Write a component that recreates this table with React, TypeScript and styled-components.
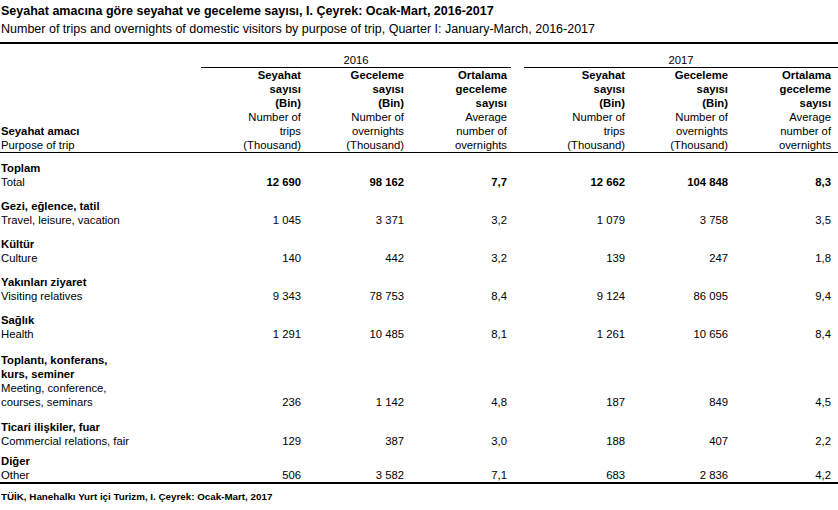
import React from "react";
import styled, { createGlobalStyle } from "styled-components";

const GlobalStyle = createGlobalStyle`
  html, body {
    margin: 0;
    padding: 0;
    background: #ffffff;
  }
  body {
    font-family: "Liberation Sans", Arial, sans-serif;
    color: #000;
  }
`;

const Page = styled.div`
  width: 838px;
  padding-top: 2px;
`;

const Title = styled.div`
  font-size: 12.5px;
  font-weight: bold;
  line-height: 18px;
  padding-left: 1px;
`;

const Subtitle = styled.div`
  font-size: 12.5px;
  line-height: 18px;
  padding-left: 1px;
`;

const Table = styled.table`
  width: 838px;
  table-layout: fixed;
  border-collapse: collapse;
  margin-top: 4px;
  border-top: 2px solid #000;
  font-size: 11.3px;
  line-height: 14px;
`;

const YearCell = styled.th<{ $line: boolean }>`
  font-weight: normal;
  text-align: center;
  padding: 9px 0 0 0;
  border-bottom: ${(p) => (p.$line ? "1px solid #000" : "none")};
`;

const HeadCell = styled.th<{ $pr: number }>`
  font-weight: normal;
  text-align: right;
  vertical-align: bottom;
  padding: 0 ${(p) => p.$pr}px 0 0;
  border-bottom: 1px solid #000;
`;

const LabelHead = styled.th`
  font-weight: normal;
  text-align: left;
  vertical-align: bottom;
  padding: 0 0 0 1px;
  border-bottom: 1px solid #000;
`;

const Line = styled.span<{ $bold?: boolean }>`
  display: block;
  white-space: nowrap;
  font-weight: ${(p) => (p.$bold ? "bold" : "normal")};
`;

const BodyRow = styled.tr<{ $last?: boolean }>`
  border-bottom: ${(p) => (p.$last ? "2px solid #000" : "none")};
`;

const LabelCell = styled.td<{ $pt: number }>`
  text-align: left;
  vertical-align: bottom;
  padding: ${(p) => p.$pt}px 0 0 1px;
`;

const NumCell = styled.td<{ $pt: number; $pr: number; $bold?: boolean }>`
  text-align: right;
  vertical-align: bottom;
  white-space: nowrap;
  padding: ${(p) => p.$pt}px ${(p) => p.$pr}px 0 0;
  font-weight: ${(p) => (p.$bold ? "bold" : "normal")};
`;

const Footer = styled.div`
  font-size: 9.8px;
  font-weight: bold;
  line-height: 12px;
  padding: 7px 0 0 1px;
`;

type Row = {
  tr: string[];
  en: string[];
  v: string[];
  pt: number;
  bold?: boolean;
};

const rows: Row[] = [
  { tr: ["Toplam"], en: ["Total"], v: ["12 690", "98 162", "7,7", "12 662", "104 848", "8,3"], pt: 8, bold: true },
  { tr: ["Gezi, eğlence, tatil"], en: ["Travel, leisure, vacation"], v: ["1 045", "3 371", "3,2", "1 079", "3 758", "3,5"], pt: 10 },
  { tr: ["Kültür"], en: ["Culture"], v: ["140", "442", "3,2", "139", "247", "1,8"], pt: 10 },
  { tr: ["Yakınları ziyaret"], en: ["Visiting relatives"], v: ["9 343", "78 753", "8,4", "9 124", "86 095", "9,4"], pt: 10 },
  { tr: ["Sağlık"], en: ["Health"], v: ["1 291", "10 485", "8,1", "1 261", "10 656", "8,4"], pt: 10 },
  {
    tr: ["Toplantı, konferans,", "kurs, seminer"],
    en: ["Meeting, conference,", "courses, seminars"],
    v: ["236", "1 142", "4,8", "187", "849", "4,5"],
    pt: 12,
  },
  { tr: ["Ticari ilişkiler, fuar"], en: ["Commercial relations, fair"], v: ["129", "387", "3,0", "188", "407", "2,2"], pt: 11 },
  { tr: ["Diğer"], en: ["Other"], v: ["506", "3 582", "7,1", "683", "2 836", "4,2"], pt: 6 },
];

const heads: { tr: string[]; en: string[] }[] = [
  { tr: ["Seyahat", "sayısı", "(Bin)"], en: ["Number of", "trips", "(Thousand)"] },
  { tr: ["Geceleme", "sayısı", "(Bin)"], en: ["Number of", "overnights", "(Thousand)"] },
  { tr: ["Ortalama", "geceleme", "sayısı"], en: ["Average", "number of", "overnights"] },
];

// right padding per data column
const pads = [4, 4, 4, 7, 7, 7];

export default function App() {
  return (
    <>
      <GlobalStyle />
      <Page>
        <Title>Seyahat amacına göre seyahat ve geceleme sayısı, I. Çeyrek: Ocak-Mart, 2016-2017</Title>
        <Subtitle>
          Number of trips and overnights of domestic visitors by purpose of trip, Quarter I: January-March, 2016-2017
        </Subtitle>
        <Table>
          <colgroup>
            <col style={{ width: 201 }} />
            <col style={{ width: 104 }} />
            <col style={{ width: 103 }} />
            <col style={{ width: 103 }} />
            <col style={{ width: 13 }} />
            <col style={{ width: 108 }} />
            <col style={{ width: 103 }} />
            <col style={{ width: 103 }} />
          </colgroup>
          <thead>
            <tr>
              <YearCell $line={false} />
              <YearCell $line colSpan={3}>
                2016
              </YearCell>
              <YearCell $line={false} />
              <YearCell $line colSpan={3}>
                2017
              </YearCell>
            </tr>
            <tr>
              <LabelHead>
                <Line $bold>Seyahat amacı</Line>
                <Line>Purpose of trip</Line>
              </LabelHead>
              {heads.map((h, i) => (
                <HeadCell key={`a${i}`} $pr={pads[i]}>
                  {h.tr.map((t) => (
                    <Line $bold key={t}>
                      {t}
                    </Line>
                  ))}
                  {h.en.map((t) => (
                    <Line key={t}>{t}</Line>
                  ))}
                </HeadCell>
              ))}
              <HeadCell $pr={0} />
              {heads.map((h, i) => (
                <HeadCell key={`b${i}`} $pr={pads[i + 3]}>
                  {h.tr.map((t) => (
                    <Line $bold key={t}>
                      {t}
                    </Line>
                  ))}
                  {h.en.map((t) => (
                    <Line key={t}>{t}</Line>
                  ))}
                </HeadCell>
              ))}
            </tr>
          </thead>
          <tbody>
            {rows.map((r, ri) => (
              <BodyRow key={r.en[0]} $last={ri === rows.length - 1}>
                <LabelCell $pt={r.pt}>
                  {r.tr.map((t) => (
                    <Line $bold key={t}>
                      {t}
                    </Line>
                  ))}
                  {r.en.map((t) => (
                    <Line key={t}>{t}</Line>
                  ))}
                </LabelCell>
                {r.v.slice(0, 3).map((v, i) => (
                  <NumCell key={`a${i}`} $pt={r.pt} $pr={pads[i]} $bold={r.bold}>
                    {v}
                  </NumCell>
                ))}
                <NumCell $pt={r.pt} $pr={0} />
                {r.v.slice(3).map((v, i) => (
                  <NumCell key={`b${i}`} $pt={r.pt} $pr={pads[i + 3]} $bold={r.bold}>
                    {v}
                  </NumCell>
                ))}
              </BodyRow>
            ))}
          </tbody>
        </Table>
        <Footer>TÜİK, Hanehalkı Yurt içi Turizm, I. Çeyrek: Ocak-Mart, 2017</Footer>
      </Page>
    </>
  );
}
